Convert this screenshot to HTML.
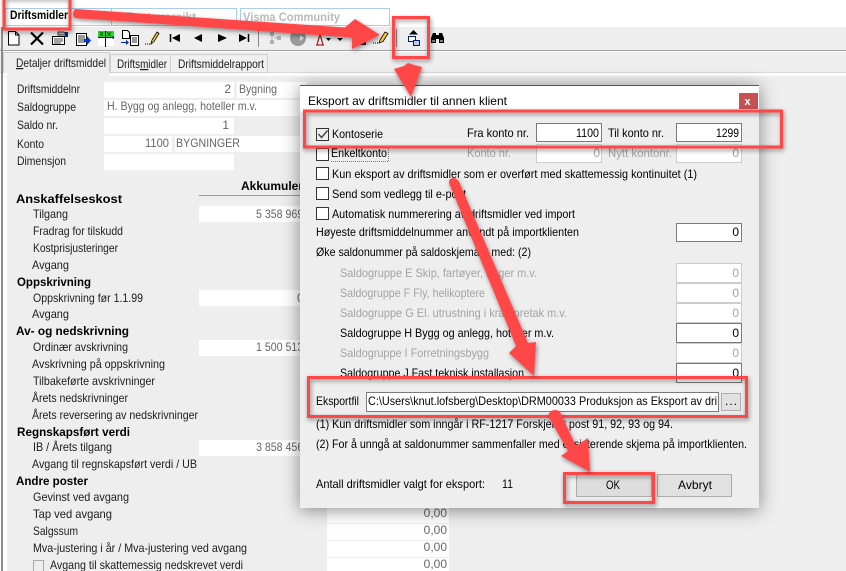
<!DOCTYPE html>
<html><head><meta charset="utf-8"><title>Eksport</title>
<style>
html,body{margin:0;padding:0;background:#fff;width:846px;height:571px;overflow:hidden}
svg{display:block}
text{font-family:"Liberation Sans",sans-serif;font-size:12px;fill:#1c1c1c;white-space:pre}
.b{font-weight:bold;fill:#000;font-size:11.5px}
.g{fill:#666}
.d{fill:#a3a3a3}
.e{text-anchor:end}
.k{fill:#000}
</style></head><body>
<svg xmlns="http://www.w3.org/2000/svg" width="846" height="571" viewBox="0 0 846 571">
<defs>
<filter id="sh" x="-10%" y="-10%" width="120%" height="120%"><feDropShadow dx="1" dy="2" stdDeviation="2.5" flood-color="#000" flood-opacity=".45"/></filter>
<filter id="dl" x="-15%" y="-15%" width="130%" height="130%"><feDropShadow dx="0" dy="2" stdDeviation="9" flood-color="#000" flood-opacity=".45"/></filter>
</defs>

<!-- base -->
<rect width="846" height="571" fill="#fff"/>
<rect x="0" y="27" width="846" height="23" fill="#eee"/>
<rect x="0" y="50" width="846" height="1" fill="#a0a0a0"/>
<rect x="0" y="52" width="846" height="20" fill="#eee"/>
<rect x="0" y="72" width="846" height="1" fill="#d8d8d8"/>
<rect x="7" y="76" width="839" height="495" fill="#eee"/>
<rect x="1" y="27" width="2" height="544" fill="#8a8a8a"/>

<!-- top tabs -->
<rect x="5.500" y="8.500" width="106" height="17" fill="#fff" stroke="#a9cdec"/>
<rect x="111.500" y="8.500" width="125" height="17" fill="#fff" stroke="#a9cdec"/>
<rect x="240.500" y="8.500" width="149" height="17" fill="#fff" stroke="#a9cdec"/>
<text class="b" x="10" y="19" textLength="58" lengthAdjust="spacingAndGlyphs" style="font-size:12px">Driftsmidler</text>
<text class="b" x="118" y="21" textLength="78" lengthAdjust="spacingAndGlyphs" style="fill:#bbb;font-size:12px">Klientoversikt</text>
<text class="b" x="243" y="21" textLength="97" lengthAdjust="spacingAndGlyphs" style="fill:#bbb;font-size:12px">Visma Community</text>

<!-- toolbar icons -->
<path d="M8.500 31.500h7l3.500 3.500v10h-10.500z M15.500 31.500v3.500h3.500" fill="#fff" stroke="#000"/>
<path d="M31 32.500l12 12M43 32.500l-12 12" stroke="#000" stroke-width="2.200" fill="none"/>
<path d="M52.500 36.500h12v8h-12z" fill="#fff" stroke="#000"/><path d="M54 39h9M54 41h9M54 43h7" stroke="#444"/><path d="M58 32h6l2 3h-8z" fill="#bbb" stroke="#333"/><rect x="65" y="32" width="3" height="5" fill="#00317a"/>
<path d="M76.500 33.500h10v12h-10z" fill="#fff" stroke="#000"/><path d="M78 36h7M78 38h7M78 40h7M78 42h7" stroke="#333"/><path d="M84 39h3v-3l4 4.500-4 4.500v-3h-3z" fill="#0033dd"/>
<rect x="98" y="31" width="16" height="6" fill="#27d52c"/><rect x="98" y="37" width="16" height="9" fill="#fff"/><path d="M105.500 31v16" stroke="#000"/><path d="M98 37.500h16" stroke="#000"/><path d="M100 32l3 4M103 32l-3 4M107 32l4 4M111 32l-4 4" stroke="#060" fill="none"/><path d="M114 36l-3 1.500 3 1.500z" fill="#00a"/>
<path d="M122.500 30.500h5l2 2v6h-7z" fill="#fff" stroke="#000"/><path d="M130.500 35.500h8v10h-8z" fill="#fff" stroke="#000"/><path d="M132 38h5M132 40h5M132 42h5" stroke="#333"/><path d="M121 42h5v-2l3 2.500-3 2.500v-2h-5z" fill="#002a9e"/>
<path d="M145 44h1M147 44h1M149 44h1" stroke="#000"/><path d="M151 44l1-4 5-8 2 1.500-5 8z" fill="#f3cc2d" stroke="#000" stroke-width=".8"/>
<path d="M170.500 34v8" stroke="#000" stroke-width="1.500"/><path d="M180 34v8l-8-4z" fill="#000"/>
<path d="M202 34v8l-8-4z" fill="#000"/>
<path d="M218 34v8l9-4z" fill="#000"/>
<path d="M239 34v8l8-4z" fill="#000"/><path d="M248.500 34v8" stroke="#000" stroke-width="1.500"/>
<rect x="258" y="30" width="1" height="17" fill="#888"/>
<path d="M270 32h4v4h-4zM270 40h4v4h-4zM277 36h4v4h-4z" fill="#b0b0b0"/><path d="M272 36v4M274 38h3" stroke="#b0b0b0"/>
<circle cx="298" cy="38" r="8" fill="#9a9a9a"/><path d="M293 38h7v-3l4 3-4 3v-3" fill="#ddd"/>
<path d="M316 34h8M320 34l-3 11M320 34l3 11M316 45h8" stroke="#a22" stroke-width="1.300" fill="none"/><path d="M326 38h5l-2.500 3z" fill="#000"/>
<path d="M337 38h6l-3 3z" fill="#000"/>
<path d="M360 42h6v3h-6z" fill="#222"/>
<path d="M373 43h1M375 43h1M377 43h1" stroke="#000"/><path d="M379 43l1-3 5-8 3 1.500-5 8z" fill="#f3cc2d" stroke="#000" stroke-width=".8"/>
<rect x="396" y="29" width="1" height="18" fill="#888"/>
<path d="M413.500 30l4.500 4.500h-9z" fill="#000"/>
<rect x="408.500" y="36.500" width="7" height="5" fill="#fff" stroke="#001c7c"/><rect x="413.500" y="40.500" width="6" height="5" fill="#bcd0ee" stroke="#001c7c"/>
<path d="M431 43v-5l2-5h3v10zM439 43v-10h3l2 5v5z" fill="#000"/><rect x="436" y="35" width="3" height="4" fill="#000"/><path d="M432 41h3M440 41h3" stroke="#fff"/>

<!-- inner tabs -->
<path d="M3.500 73V52.500H109.500V73" fill="#eee" stroke="#ccc"/><rect x="4" y="71" width="105" height="6" fill="#eee"/>
<rect x="3" y="73" width="4" height="3" fill="#fff"/>
<rect x="110.500" y="54.500" width="60" height="18" fill="#f0f0f0" stroke="#d0d0d0"/>
<rect x="170.500" y="54.500" width="97" height="18" fill="#f0f0f0" stroke="#d0d0d0"/>
<text x="16" y="67" textLength="90" lengthAdjust="spacingAndGlyphs"><tspan text-decoration="underline">D</tspan>etaljer driftsmiddel</text>
<text x="117" y="68" textLength="50" lengthAdjust="spacingAndGlyphs">Drifts<tspan text-decoration="underline">m</tspan>idler</text>
<text x="178" y="68" textLength="86" lengthAdjust="spacingAndGlyphs">Driftsmiddelrapport</text>

<!-- form fields -->
<g fill="#fff">
<rect x="104" y="82" width="130" height="16"/><rect x="237" y="82" width="70" height="16"/>
<rect x="104" y="100" width="200" height="16"/>
<rect x="104" y="118" width="130" height="16"/>
<rect x="104" y="136" width="68" height="16"/><rect x="175" y="136" width="130" height="16"/>
<rect x="104" y="154" width="130" height="16"/>
<rect x="199" y="206" width="105" height="16"/>
<rect x="199" y="290" width="105" height="16"/>
<rect x="199" y="340" width="105" height="16"/>
<rect x="199" y="440" width="105" height="16"/>
<rect x="327" y="507" width="122" height="16"/><rect x="327" y="524" width="122" height="16"/><rect x="327" y="541" width="122" height="16"/><rect x="327" y="558" width="122" height="13"/>
</g>
<rect x="199" y="195" width="105" height="1" fill="#999"/>
<text x="241" y="190" class="b" textLength="66" lengthAdjust="spacingAndGlyphs">Akkumulert</text>

<text x="17" y="93" textLength="63" lengthAdjust="spacingAndGlyphs">Driftsmiddelnr</text>
<text x="17" y="111" textLength="59" lengthAdjust="spacingAndGlyphs">Saldogruppe</text>
<text x="17" y="129" textLength="41" lengthAdjust="spacingAndGlyphs">Saldo nr.</text>
<text x="17" y="148" textLength="27" lengthAdjust="spacingAndGlyphs">Konto</text>
<text x="17" y="165" textLength="49" lengthAdjust="spacingAndGlyphs">Dimensjon</text>
<text x="16" y="203" class="b" textLength="106" lengthAdjust="spacingAndGlyphs">Anskaffelseskost</text>
<text x="33" y="218" textLength="35" lengthAdjust="spacingAndGlyphs">Tilgang</text>
<text x="33" y="235" textLength="90" lengthAdjust="spacingAndGlyphs">Fradrag for tilskudd</text>
<text x="33" y="252" textLength="85" lengthAdjust="spacingAndGlyphs">Kostprisjusteringer</text>
<text x="32" y="269" textLength="37" lengthAdjust="spacingAndGlyphs">Avgang</text>
<text x="17" y="286" class="b" textLength="74" lengthAdjust="spacingAndGlyphs">Oppskrivning</text>
<text x="33" y="302" textLength="110" lengthAdjust="spacingAndGlyphs">Oppskrivning før 1.1.99</text>
<text x="32" y="318" textLength="37" lengthAdjust="spacingAndGlyphs">Avgang</text>
<text x="16" y="335" class="b" textLength="113" lengthAdjust="spacingAndGlyphs">Av- og nedskrivning</text>
<text x="33" y="351" textLength="95" lengthAdjust="spacingAndGlyphs">Ordinær avskrivning</text>
<text x="32" y="368" textLength="133" lengthAdjust="spacingAndGlyphs">Avskrivning på oppskrivning</text>
<text x="33" y="385" textLength="122" lengthAdjust="spacingAndGlyphs">Tilbakeførte avskrivninger</text>
<text x="32" y="402" textLength="96" lengthAdjust="spacingAndGlyphs">Årets nedskrivninger</text>
<text x="32" y="419" textLength="166" lengthAdjust="spacingAndGlyphs">Årets reversering av nedskrivninger</text>
<text x="17" y="436" class="b" textLength="113" lengthAdjust="spacingAndGlyphs">Regnskapsført verdi</text>
<text x="33" y="451" textLength="79" lengthAdjust="spacingAndGlyphs">IB / Årets tilgang</text>
<text x="32" y="468" textLength="165" lengthAdjust="spacingAndGlyphs">Avgang til regnskapsført verdi / UB</text>
<text x="16" y="485" class="b" textLength="72" lengthAdjust="spacingAndGlyphs">Andre poster</text>
<text x="33" y="501" textLength="96" lengthAdjust="spacingAndGlyphs">Gevinst ved avgang</text>
<text x="33" y="518" textLength="79" lengthAdjust="spacingAndGlyphs">Tap ved avgang</text>
<text x="33" y="535" textLength="45" lengthAdjust="spacingAndGlyphs">Salgssum</text>
<text x="33" y="552" textLength="214" lengthAdjust="spacingAndGlyphs">Mva-justering i år / Mva-justering ved avgang</text>
<text x="50" y="569" textLength="193" lengthAdjust="spacingAndGlyphs">Avgang til skattemessig nedskrevet verdi</text>
<rect x="33.500" y="560.500" width="10" height="11" fill="#eee" stroke="#aaa"/>

<text class="g e" x="231" y="93">2</text>
<text class="g" x="239" y="93" textLength="38" lengthAdjust="spacingAndGlyphs">Bygning</text>
<text class="g" x="107" y="110" textLength="150" lengthAdjust="spacingAndGlyphs">H. Bygg og anlegg, hoteller m.v.</text>
<text class="g e" x="229" y="129">1</text>
<text class="g" x="145" y="147" textLength="24" lengthAdjust="spacingAndGlyphs">1100</text>
<text class="g" x="176" y="147" textLength="64" lengthAdjust="spacingAndGlyphs">BYGNINGER</text>
<text class="g" x="256" y="218" textLength="62" lengthAdjust="spacingAndGlyphs">5 358 969,00</text>
<text class="g" x="297" y="302">0,00</text>
<text class="g" x="256" y="351" textLength="62" lengthAdjust="spacingAndGlyphs">1 500 513,00</text>
<text class="g" x="256" y="451" textLength="62" lengthAdjust="spacingAndGlyphs">3 858 456,00</text>
<text class="g e" x="447" y="517">0,00</text>
<text class="g e" x="447" y="534">0,00</text>
<text class="g e" x="447" y="551">0,00</text>
<text class="g e" x="447" y="568">0,00</text>

<!-- dialog -->
<rect x="300" y="85" width="459" height="423" fill="#eee" filter="url(#dl)"/>
<rect x="300" y="85" width="459" height="1" fill="#555"/>
<rect x="300" y="86" width="459" height="26" fill="#fff"/>
<rect x="739" y="93" width="19" height="16" fill="#c75050"/>
<text x="744.500" y="105" style="fill:#fff;font-weight:bold;font-size:11px">x</text>
<text x="308" y="105" class="k" textLength="199" lengthAdjust="spacingAndGlyphs">Eksport av driftsmidler til annen klient</text>

<!-- check boxes -->
<g fill="#fff" stroke="#333">
<rect x="316.500" y="128.500" width="12" height="12" fill="#eee"/>
<rect x="316.500" y="148.500" width="12" height="12"/>
<rect x="316.500" y="167.500" width="12" height="12"/>
<rect x="316.500" y="187.500" width="12" height="12"/>
<rect x="316.500" y="207.500" width="12" height="12"/>
</g>
<path d="M318.500 134l3 3.500 6-7" fill="none" stroke="#444" stroke-width="1.400"/>
<path d="M331 161.500h57.500v-13" fill="none" stroke="#777" stroke-dasharray="1 1"/>

<!-- inputs -->
<g fill="#fff" stroke="#7a7a7a">
<rect x="536.500" y="123.500" width="65" height="18"/>
<rect x="676.500" y="123.500" width="65" height="18"/>
<rect x="676.500" y="223.500" width="65" height="18"/>
<rect x="676.500" y="323.500" width="65" height="19"/>
<rect x="676.500" y="363.500" width="65" height="19"/>
<rect x="366.500" y="392.500" width="352" height="19"/>
</g>
<g fill="#fff" stroke="#ccc">
<rect x="536.500" y="144.500" width="65" height="18"/>
<rect x="676.500" y="144.500" width="65" height="18"/>
<rect x="676.500" y="263.500" width="65" height="19"/>
<rect x="676.500" y="283.500" width="65" height="19"/>
<rect x="676.500" y="303.500" width="65" height="19"/>
<rect x="676.500" y="343.500" width="65" height="19"/>
</g>
<rect x="721.500" y="393.500" width="19" height="17" fill="#e1e1e1" stroke="#adadad"/>
<text x="725" y="405" class="k" textLength="12" lengthAdjust="spacing">...</text>

<!-- dialog text -->
<text class="k" x="332" y="138" textLength="51" lengthAdjust="spacingAndGlyphs">Kontoserie</text>
<text class="k" x="467" y="137" textLength="62" lengthAdjust="spacingAndGlyphs">Fra konto nr.</text>
<text class="k" x="576" y="137" textLength="23" lengthAdjust="spacingAndGlyphs">1100</text>
<text class="k" x="608" y="137" textLength="56" lengthAdjust="spacingAndGlyphs">Til konto nr.</text>
<text class="k" x="716" y="137" textLength="23" lengthAdjust="spacingAndGlyphs">1299</text>
<text class="k" x="331" y="157" textLength="56" lengthAdjust="spacingAndGlyphs">Enkeltkonto</text>
<text class="d" x="467" y="157" textLength="44" lengthAdjust="spacingAndGlyphs">Konto nr.</text>
<text class="d e" x="600" y="157">0</text>
<text class="d" x="608" y="157" textLength="64" lengthAdjust="spacingAndGlyphs">Nytt kontonr.</text>
<text class="d e" x="739" y="157">0</text>
<text class="k" x="332" y="178" textLength="365" lengthAdjust="spacingAndGlyphs">Kun eksport av driftsmidler som er overført med skattemessig kontinuitet (1)</text>
<text class="k" x="332" y="198" textLength="134" lengthAdjust="spacingAndGlyphs">Send som vedlegg til e-post</text>
<text class="k" x="332" y="218" textLength="243" lengthAdjust="spacingAndGlyphs">Automatisk nummerering av driftsmidler ved import</text>
<text class="k" x="316" y="236" textLength="263" lengthAdjust="spacingAndGlyphs">Høyeste driftsmiddelnummer anvendt på importklienten</text>
<text class="k e" x="739" y="236">0</text>
<text class="k" x="316" y="256" textLength="215" lengthAdjust="spacingAndGlyphs">Øke saldonummer på saldoskjemaet med: (2)</text>
<text class="d" x="340" y="277" textLength="197" lengthAdjust="spacingAndGlyphs">Saldogruppe E Skip, fartøyer, rigger m.v.</text>
<text class="d e" x="739" y="277">0</text>
<text class="d" x="340" y="297" textLength="145" lengthAdjust="spacingAndGlyphs">Saldogruppe F Fly, helikoptere</text>
<text class="d e" x="739" y="297">0</text>
<text class="d" x="340" y="317" textLength="227" lengthAdjust="spacingAndGlyphs">Saldogruppe G El. utrustning i kraftforetak m.v.</text>
<text class="d e" x="739" y="317">0</text>
<text class="k" x="340" y="337" textLength="214" lengthAdjust="spacingAndGlyphs">Saldogruppe H Bygg og anlegg, hoteller m.v.</text>
<text class="k e" x="739" y="337">0</text>
<text class="d" x="340" y="357" textLength="149" lengthAdjust="spacingAndGlyphs">Saldogruppe I Forretningsbygg</text>
<text class="d e" x="739" y="357">0</text>
<text class="k" x="340" y="377" textLength="184" lengthAdjust="spacingAndGlyphs">Saldogruppe J Fast teknisk installasjon</text>
<text class="k e" x="739" y="377">0</text>
<text class="k" x="316" y="405" textLength="43" lengthAdjust="spacingAndGlyphs">Eksportfil</text>
<text class="k" x="368" y="405" textLength="349" lengthAdjust="spacingAndGlyphs">C:\Users\knut.lofsberg\Desktop\DRM00033 Produksjon as Eksport av dri</text>
<text class="k" x="316" y="428" textLength="357" lengthAdjust="spacingAndGlyphs">(1) Kun driftsmidler som inngår i RF-1217 Forskjeller post 91, 92, 93 og 94.</text>
<text class="k" x="316" y="448" textLength="431" lengthAdjust="spacingAndGlyphs">(2) For å unngå at saldonummer sammenfaller med eksisterende skjema på importklienten.</text>
<text class="k" x="316" y="488" textLength="169" lengthAdjust="spacingAndGlyphs">Antall driftsmidler valgt for eksport:</text>
<text class="k" x="502" y="488" textLength="11" lengthAdjust="spacingAndGlyphs">11</text>
<rect x="576.500" y="474.500" width="75" height="22" fill="#ddd" stroke="#adadad"/>
<rect x="657.500" y="474.500" width="74" height="22" fill="#e1e1e1" stroke="#adadad"/>
<text class="k" x="606" y="489" textLength="14" lengthAdjust="spacingAndGlyphs">OK</text>
<text class="k" x="678" y="489" textLength="34" lengthAdjust="spacingAndGlyphs">Avbryt</text>

<!-- red annotations -->
<g filter="url(#sh)" fill="none" stroke="#ff4646" stroke-width="3">
<rect x="4" y="-3" width="66" height="32"/>
<rect x="393.500" y="17.500" width="35" height="40"/>
<rect x="304.500" y="111" width="477" height="36"/>
<rect x="308.500" y="377.500" width="438" height="39"/>
<rect x="564.500" y="473.500" width="89" height="29"/>
</g>
<g filter="url(#sh)" fill="#ff4646">
<path d="M75 9L345 27.500L355 19L380 35L352 49L352 37.500L75 18Q71 14 75 9Z"/>
<path d="M394 69L404 66L408 63L414 65L422 67L411 97Z"/>
<path d="M449 183Q449 178 453 178Q458 178 460 184L528 343L536 342L534 376L509 353L516 346Z"/>
<path d="M548 416Q550 410 555 410Q558 410 560 412L576 446L588 438L590 472L561 456L568 451Z"/>
</g>
</svg>
</body></html>
